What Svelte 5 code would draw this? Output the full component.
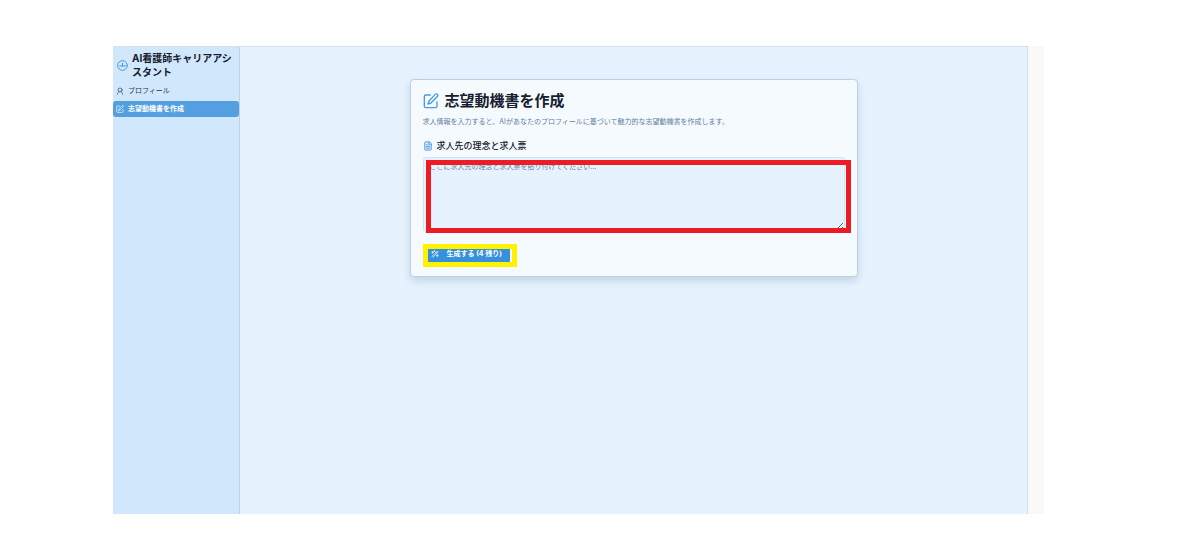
<script>
  const navItems = [
    { label: 'プロフィール', icon: 'user', active: false },
    { label: '志望動機書を作成', icon: 'edit', active: true },
  ];

  let remaining = $state(4);
  let posting = $state('');

  function generate() {
    if (remaining > 0) remaining -= 1;
  }
</script>

{#snippet icon(name)}
  <svg class="icon" viewBox="0 0 24 24" aria-hidden="true">
    {#if name === 'logo'}
      <circle cx="12" cy="12" r="10.5" />
      <path d="M12 7v6M6 13h12" />
    {:else if name === 'user'}
      <circle cx="12" cy="9" r="6" />
      <path d="M4 22c0-4 2-6.5 5-7.5M20 22c0-4-2-6.5-5-7.5" />
    {:else if name === 'edit'}
      <path d="M11 3H4a2 2 0 0 0-2 2v15a2 2 0 0 0 2 2h15a2 2 0 0 0 2-2v-7" />
      <path d="M18.4 2.1a2.1 2.1 0 0 1 3.2 3.2L12 15l-4.5 1.5L9 12z" />
    {:else if name === 'file'}
      <path class="tint" d="M15 2H6a2 2 0 0 0-2 2v16a2 2 0 0 0 2 2h12a2 2 0 0 0 2-2V7z" />
      <path d="M14 2v6h6M8 9h2M8 13h8M8 17h8" />
    {:else if name === 'wand'}
      <path d="M21 5l-2-2L3 19l2 2zM14 7l3 3" />
      <path d="M5 4v6M2 7h6M19 14v6M16 17h6M10 2v3M9 3h3" />
    {/if}
  </svg>
{/snippet}

<div class="page">
  <div class="window">
    <div class="app">
      <aside class="sidebar">
        <div class="brand">
          {@render icon('logo')}
          <h1>AI看護師キャリアアシスタント</h1>
        </div>
        <nav>
          {#each navItems as item}
            <a href="#{item.icon}" class:active={item.active}>
              {@render icon(item.icon)}
              {item.label}
            </a>
          {/each}
        </nav>
      </aside>

      <main>
        <section class="card">
          <h2>{@render icon('edit')}志望動機書を作成</h2>
          <p>求人情報を入力すると、AIがあなたのプロフィールに基づいて魅力的な志望動機書を作成します。</p>
          <label for="posting">{@render icon('file')}求人先の理念と求人票</label>
          <div class="field">
            <textarea
              id="posting"
              bind:value={posting}
              placeholder="ここに求人先の理念と求人票を貼り付けてください..."
            ></textarea>
            <div class="mark red"></div>
          </div>
          <div class="action">
            <button type="button" onclick={generate}>
              {@render icon('wand')}
              生成する ({remaining} 残り)
            </button>
            <div class="mark yellow"></div>
          </div>
        </section>
      </main>
    </div>
    <div class="gutter"></div>
  </div>
</div>

<style>
  :global(body) {
    margin: 0;
    background: #fff;
  }

  .page {
    box-sizing: border-box;
    min-height: 100vh;
    padding: 46px 133px 42px 113px;
    display: flex;
    font-family: Inter, "Noto Sans CJK JP", sans-serif;
    color: #15202e;
  }

  .window,
  .app {
    flex: 1;
    display: flex;
    min-width: 0;
  }

  .app {
    border-top: 1px solid #d9dfe6;
    border-right: 1px solid #d3dce5;
    background: #e6f3ff;
  }

  .gutter {
    width: 16px;
    background: #faf8f9;
  }

  .icon {
    flex: none;
    width: 8px;
    height: 8px;
    fill: none;
    stroke: currentColor;
    stroke-width: 2;
    stroke-linecap: round;
    stroke-linejoin: round;
  }

  .tint {
    fill: #cfe5f8;
  }

  .sidebar {
    flex: none;
    width: 126px;
    border-right: 1px solid #bcd3e5;
    background: #d1e7fb;
  }

  .brand {
    display: flex;
    align-items: center;
    gap: 4px;
    padding: 4px;
    color: #3690dc;
  }

  .brand .icon {
    width: 11px;
    height: 11px;
  }

  h1 {
    margin: 0;
    font-size: 10px;
    line-height: 14px;
    font-weight: 700;
    color: #15202e;
  }

  nav {
    display: flex;
    flex-direction: column;
    gap: 2px;
  }

  nav a {
    display: flex;
    align-items: center;
    gap: 4px;
    padding: 0 3px;
    border-radius: 3px;
    font-size: 7px;
    line-height: 16px;
    color: #2b3a4b;
    text-decoration: none;
  }

  nav a.active {
    background: #549fdf;
    color: #fff;
    font-weight: 700;
  }

  main {
    flex: 1;
    min-width: 0;
    padding: 32px 16px;
  }

  .card {
    box-sizing: border-box;
    max-width: 448px;
    margin: 0 auto;
    padding: 12px;
    border: 1px solid #bdd0e0;
    border-radius: 4px;
    background: #f5faff;
    box-shadow: 0 4px 8px rgba(60, 90, 120, 0.2);
  }

  h2 {
    display: flex;
    align-items: center;
    gap: 6px;
    margin: 0;
    font-size: 15px;
    line-height: 18px;
    font-weight: 700;
  }

  h2 .icon {
    width: 16px;
    height: 16px;
    color: #4a9be2;
  }

  p {
    margin: 6px 0 11px;
    font-size: 7px;
    line-height: 12px;
    color: #64809f;
  }

  label {
    display: flex;
    align-items: center;
    gap: 4px;
    margin-bottom: 4px;
    font-size: 9px;
    line-height: 14px;
    font-weight: 500;
  }

  label .icon {
    width: 10px;
    height: 10px;
    color: #4a9be2;
  }

  .field,
  .action {
    position: relative;
  }

  textarea {
    display: block;
    box-sizing: border-box;
    width: 100%;
    height: 75px;
    padding: 4px 6px;
    border: 1px solid #d3e3f0;
    border-radius: 3px;
    background: #e6f3ff;
    font-family: inherit;
    font-size: 7px;
    line-height: 10px;
    color: inherit;
    resize: vertical;
  }

  textarea::placeholder {
    color: #64809f;
  }

  .action {
    width: fit-content;
    margin-top: 14px;
  }

  button {
    display: flex;
    align-items: center;
    gap: 8px;
    padding: 0 8px 2px;
    border: 0;
    border-radius: 3px;
    background: #3690dc;
    font-family: inherit;
    font-size: 7px;
    line-height: 16px;
    font-weight: 700;
    color: #fff;
  }

  .mark {
    position: absolute;
    pointer-events: none;
  }

  .red {
    inset: 3px -6px -1px 3px;
    border: 5px solid #ed1c24;
  }

  .yellow {
    inset: -2px -7px -3px 0;
    border: 5px solid #fff200;
  }
</style>
